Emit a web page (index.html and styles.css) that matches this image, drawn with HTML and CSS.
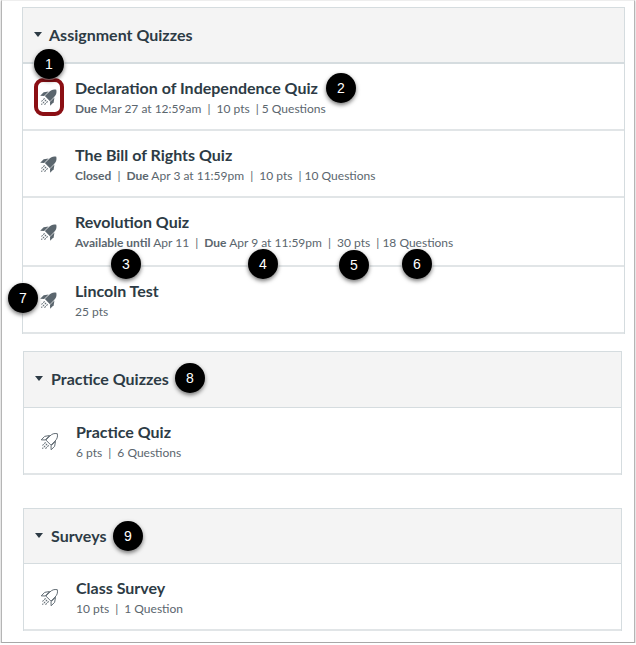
FILE: index.html
```html
<!DOCTYPE html>
<html lang="en">
<head>
    <meta charset="UTF-8" />
    <title>Quizzes</title>
    <link rel="stylesheet" href="styles.css">
</head>
<body>
    <svg class="defs" width="0" height="0">
        <symbol id="rocket" viewBox="0 0 20 20">
            <g transform="rotate(45 10 10)">
                <path class="part" d="M10 -1.5 C13 0.5 14 3 14 6 L14 12.5 L6 12.5 L6 6 C6 3 7 0.5 10 -1.5 Z"/>
                <path class="part" d="M5.4 6 L2.2 10.5 L2.2 16 L5.4 13 Z"/>
                <path class="part" d="M14.6 6 L17.8 10.5 L17.8 16 L14.6 13 Z"/>
                <path class="trail" d="M10 14.5 L10 22 M7.6 14.5 L7.6 19.5 M12.4 14.5 L12.4 19.5"/>
            </g>
        </symbol>
    </svg>
    <div class="frame">
        <section class="group first">
            <h3 class="groupHead"><span class="caret"></span>Assignment Quizzes</h3>
            <div class="row">
                <div class="iconBox marked"><svg class="rocket"><use href="#rocket"/></svg></div>
                <div class="text">
                    <div class="title">Declaration of Independence Quiz</div>
                    <div class="meta"><b>Due</b> Mar 27 at 12:59am <i>|</i> 10 pts <i class="tight">|</i> 5 Questions</div>
                </div>
                <span class="badge badge1">1</span>
                <span class="badge badge2">2</span>
            </div>
            <div class="row">
                <div class="iconBox"><svg class="rocket"><use href="#rocket"/></svg></div>
                <div class="text">
                    <div class="title">The Bill of Rights Quiz</div>
                    <div class="meta"><b>Closed</b> <i>|</i> <b>Due</b> Apr 3 at 11:59pm <i>|</i> 10 pts <i class="tight">|</i> 10 Questions</div>
                </div>
            </div>
            <div class="row tall">
                <div class="iconBox"><svg class="rocket"><use href="#rocket"/></svg></div>
                <div class="text">
                    <div class="title">Revolution Quiz</div>
                    <div class="meta"><b>Available until</b> Apr 11 <i>|</i> <b>Due</b> Apr 9 at 11:59pm <i>|</i> 30 pts <i class="tight">|</i> 18 Questions</div>
                </div>
                <span class="badge badge3">3</span>
                <span class="badge badge4">4</span>
                <span class="badge badge5">5</span>
                <span class="badge badge6">6</span>
            </div>
            <div class="row">
                <div class="iconBox"><svg class="rocket"><use href="#rocket"/></svg></div>
                <div class="text">
                    <div class="title">Lincoln Test</div>
                    <div class="meta">25 pts</div>
                </div>
                <span class="badge badge7">7</span>
            </div>
        </section>

        <section class="group second">
            <h3 class="groupHead"><span class="caret"></span>Practice Quizzes<span class="badge badge8">8</span></h3>
            <div class="row">
                <div class="iconBox"><svg class="rocket line"><use href="#rocket"/></svg></div>
                <div class="text">
                    <div class="title">Practice Quiz</div>
                    <div class="meta">6 pts <i>|</i> 6 Questions</div>
                </div>
            </div>
        </section>

        <section class="group third">
            <h3 class="groupHead"><span class="caret"></span>Surveys<span class="badge badge9">9</span></h3>
            <div class="row">
                <div class="iconBox"><svg class="rocket line"><use href="#rocket"/></svg></div>
                <div class="text">
                    <div class="title">Class Survey</div>
                    <div class="meta">10 pts <i>|</i> 1 Question</div>
                </div>
            </div>
        </section>
    </div>
</body>
</html>
```

FILE: styles.css
```css
body {
    font-family: Lato, "Open Sans", sans-serif;
    background: #ffffff;
    color: #2d3b45;
    margin: 0;
    padding: 0;
}
.defs {
    position: absolute;
}
.frame {
    box-sizing: border-box;
    width: 634px;
    height: 643px;
    margin-left: 1px;
    padding-top: 6px;
    background: #ffffff;
    border-top: 1px solid #eeeeee;
    border-left: 1px solid #b5b5b5;
    border-right: 1px solid #b5b5b5;
    border-bottom: 1px solid #a8a8a8;
    box-shadow: 0 1px 2px rgba(0, 0, 0, 0.3);
}
.group {
    border: 1px solid #d5dcdf;
    border-bottom-width: 0;
}
.first {
    width: 601px;
    margin-left: 20px;
}
.second {
    width: 597px;
    margin: 17px 0 0 21px;
}
.third {
    width: 597px;
    margin: 33px 0 0 21px;
}
.groupHead {
    position: relative;
    display: flex;
    align-items: center;
    box-sizing: border-box;
    height: 56px;
    margin: 0;
    padding: 0 0 2px 11px;
    background: #f4f4f4;
    border-bottom: 2px solid #d5dcdf;
    font-size: 16px;
    font-weight: 700;
}
.second .groupHead, .third .groupHead {
    border-bottom-width: 1px;
}
.third .groupHead {
    height: 55px;
}
.first .caret {
    margin-right: 7px;
}
.caret {
    width: 0;
    height: 0;
    margin-right: 8px;
    border-left: 4px solid transparent;
    border-right: 4px solid transparent;
    border-top: 5px solid #2d3b45;
}
.row {
    position: relative;
    display: flex;
    align-items: center;
    gap: 11px;
    box-sizing: border-box;
    height: 67px;
    padding-left: 11px;
    border-bottom: 2px solid #e1e5e7;
}
.tall {
    height: 69px;
}
.text {
    padding-top: 2px;
}
.tall .text {
    margin-bottom: 2px;
}
.iconBox {
    display: flex;
    align-items: center;
    justify-content: center;
    box-sizing: border-box;
    width: 30px;
    height: 38px;
    border: 4px solid transparent;
    border-radius: 9px;
}
.marked {
    border-color: #8b0f14;
}
.rocket {
    --rocket-fill: #5b666e;
    width: 18px;
    height: 18px;
    flex: none;
    overflow: visible;
}
.rocket.line {
    --rocket-fill: #ffffff;
    --rocket-stroke: #5b666e;
}
.part {
    fill: var(--rocket-fill);
    stroke: var(--rocket-stroke, none);
    stroke-width: 1;
}
.trail {
    fill: none;
    stroke: #5b666e;
    stroke-width: 1.1;
    stroke-dasharray: 2 1;
}
.title {
    font-size: 16px;
    font-weight: 700;
    line-height: 20px;
}
.meta {
    margin-top: 2px;
    font-size: 12px;
    line-height: 18px;
    color: #5b666e;
}
.meta b {
    font-weight: 700;
}
.meta i {
    font-style: normal;
    margin: 0 3px;
}
.meta i.tight {
    margin-right: 0;
}
.badge {
    position: absolute;
    width: 30px;
    height: 30px;
    border-radius: 50%;
    background: #000000;
    color: #ffffff;
    font-family: "Liberation Sans", sans-serif;
    font-size: 14px;
    font-weight: 400;
    line-height: 30px;
    text-align: center;
    box-shadow: 0 2px 4px rgba(0, 0, 0, 0.55), 0 0 0 1px rgba(255, 255, 255, 0.5);
}
.badge1 { left: 11px; top: -15px; }
.badge2 { left: 303px; top: 9px; }
.badge3 { left: 88px; top: 51px; }
.badge4 { left: 225px; top: 51px; }
.badge5 { left: 316px; top: 52px; }
.badge6 { left: 379px; top: 51px; }
.badge7 { left: -15px; top: 16px; }
.badge8 { left: 151px; top: 11px; }
.badge9 { left: 89px; top: 12px; }
```
